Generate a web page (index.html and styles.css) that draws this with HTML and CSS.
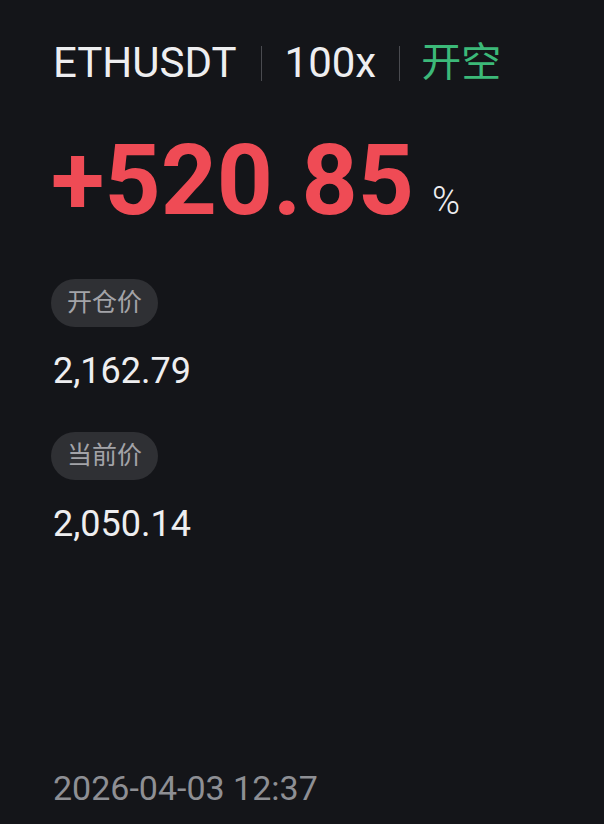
FILE: index.html
```html
<!DOCTYPE html>
<html lang="zh-CN">
  <head>
    <meta charset="UTF-8" />
    <meta name="viewport" content="width=device-width, initial-scale=1.0" />
    <title>ETHUSDT</title>
    <link rel="stylesheet" href="styles.css">
  </head>
  <body>
    <main class="card">
      <div class="head">
        <span class="symbol">ETHUSDT</span>
        <span class="divider"></span>
        <span class="lever">100x</span>
        <span class="divider"></span>
        <span class="side">开空</span>
      </div>
      <div class="pnl">
        <span class="pnl-value">+520.85</span>
        <span class="pnl-unit">%</span>
      </div>
      <div class="field">
        <span class="field-key">开仓价</span>
        <span class="field-value">2,162.79</span>
      </div>
      <div class="field">
        <span class="field-key">当前价</span>
        <span class="field-value">2,050.14</span>
      </div>
      <div class="stamp">2026-04-03 12:37</div>
    </main>
  </body>
</html>
```

FILE: styles.css
```css
:root {
  --background-color: #141519;
  --text-color: #eeeef0;
  --muted-color: #8e8f94;
  --pill-color: #2f3034;
  --pill-text-color: #a3a3a8;
  --red-color: #ef4b55;
  --green-color: #3cb979;
  --line-color: #4a4b50;
}

* {
  box-sizing: border-box;
}

html,
body {
  height: 100%;
  margin: 0;
}

body {
  background-color: var(--background-color);
  color: var(--text-color);
  font-family: Roboto, "Noto Sans CJK SC", sans-serif;
}

.card {
  height: 100%;
  display: flex;
  flex-direction: column;
  padding: 37px 0 14px 53px;
}

.head {
  display: flex;
  align-items: center;
  gap: 23px;
  font-size: 42px;
  line-height: 52px;
}

.symbol {
  margin-right: 1px;
}

.divider {
  width: 1px;
  height: 35px;
  background-color: var(--line-color);
}

.side {
  margin-left: -2px;
  color: var(--green-color);
  font-size: 40px;
}

.pnl {
  display: flex;
  align-items: baseline;
  gap: 18px;
  margin-top: 42px;
  margin-left: -2px;
}

.pnl-value {
  color: var(--red-color);
  font-size: 98px;
  font-weight: 700;
  line-height: 100px;
}

.pnl-unit {
  font-size: 38px;
  font-weight: 300;
}

.field {
  display: flex;
  flex-direction: column;
  align-items: flex-start;
  margin-top: 48px;
}

.field + .field {
  margin-top: 39px;
}

.field-key {
  margin-left: -2px;
  padding: 0 16px;
  height: 48px;
  line-height: 48px;
  border-radius: 24px;
  background-color: var(--pill-color);
  color: var(--pill-text-color);
  font-size: 25px;
}

.field-value {
  margin-top: 22px;
  font-size: 36px;
  line-height: 44px;
}

.stamp {
  margin-top: auto;
  color: var(--muted-color);
  font-size: 34px;
  line-height: 44px;
}
```
